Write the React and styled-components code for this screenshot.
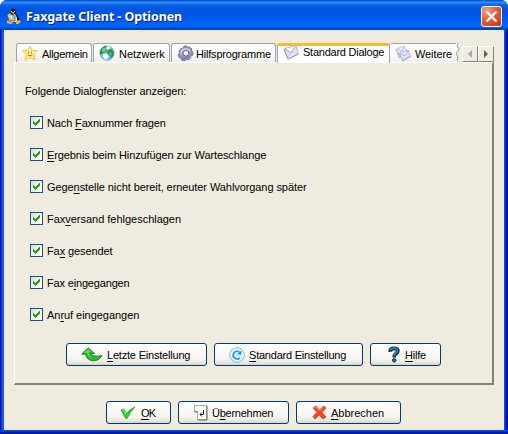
import React from "react";
import styled, { createGlobalStyle, css } from "styled-components";

const Global = createGlobalStyle`
  * { box-sizing: border-box; }
  body { margin: 0; background: #fff; overflow: hidden; font: 11px/14px "Liberation Sans", Arial, sans-serif; color: #000; }
  svg { display: block; flex: none; }
`;

const Window = styled.div`
  width: 508px;
  height: 434px;
  border-radius: 7px 7px 0 0;
  overflow: hidden;
  display: flex;
  flex-direction: column;
  background:
    linear-gradient(180deg, #0850e0 0, #0040d8 1px, #0030c0 2px, #0010a0 3px, #00138c 4px) 0 100% / 100% 4px no-repeat,
    linear-gradient(90deg, #0010b0 0, #0010b0 1px, #0831d9 1px, #0831d9 2px, #166aee 2px, #0855dd 4px, #0855dd 504px, #0050ee 504px, #0050ee 505px, #0033cc 505px, #0033cc 506px, #00138c 506px);
`;

const TitleBar = styled.header`
  height: 30px;
  flex: none;
  display: flex;
  align-items: center;
  padding: 2px 6px 0 6px;
  background: linear-gradient(180deg, #0050c8 0, #0058d8 1px, #3d95ff 2px, #2483f8 3px, #0a63e6 5px, #0056e0 8px, #0054e3 14px, #005cf4 20px, #0066ff 25px, #0064fa 27px, #0050d4 28px, #003dac 30px);
`;

const Title = styled.h1`
  margin: 2px auto 0 4px;
  font: bold 12.5px/18px "Noto Sans", sans-serif;
  letter-spacing: ${(p) => p.$track}px;
  white-space: nowrap;
  color: #fff;
  text-shadow: 1px 1px 0 #0a1883;
`;

const CloseButton = styled.button`
  width: 21px;
  height: 21px;
  margin-top: 1px;
  padding: 0;
  border: 1px solid #fff;
  border-radius: 3px;
  background: radial-gradient(circle at 25% 20%, #f0a088 0, #e4603c 45%, #d8401c 80%, #b93010 100%);
  display: flex;
  align-items: center;
  justify-content: center;
`;

const Client = styled.main`
  width: 500px;
  height: 400px;
  margin-left: 4px;
  background: #efebde;
  padding: 13px 10px 0;
`;

const TabStrip = styled.nav`
  height: 19px;
  display: flex;
  padding-left: 2px;
`;

const Tab = styled.div`
  width: ${(p) => p.$width}px;
  height: 19px;
  flex: none;
  display: flex;
  align-items: flex-start;
  gap: ${(p) => p.$gap}px;
  padding: 1px 0 0 5px;
  margin-right: ${(p) => (p.$active || p.$cut ? 0 : 1)}px;
  border: 1px solid #91a7b4;
  border-bottom: 0;
  ${(p) => p.$cut && css`border-right: 0; border-left: 0;`}
  border-radius: 3px ${(p) => (p.$cut ? 0 : 3)}px 0 0;
  background: linear-gradient(180deg, #fff, #fbfaf7 55%, #efede6);
  overflow: hidden;
  ${(p) => p.$active && css`
    height: 20px;
    border-top: 3px solid #fdb92d;
    background: #fff;
    padding-top: 0;
    & > svg { margin-top: -2px; }
    & > span { margin-top: -1px; }
  `}
`;

const Label = styled.span`
  letter-spacing: ${(p) => p.$track || 0}px;
  white-space: nowrap;
  padding-top: ${(p) => p.$drop || 0}px;
`;

const Key = styled.span`
  text-decoration: underline;
  text-decoration-thickness: 1px;
  text-underline-offset: 2px;
  text-decoration-skip-ink: none;
`;

const Scroller = styled.div`
  margin: 3px 0 0 2px;
  display: flex;
`;

const ScrollButton = styled.button`
  width: 16px;
  height: 16px;
  padding: 0;
  border: 1px solid;
  border-color: #fff #858278 #858278 #fff;
  background: #efebde;
  display: flex;
  align-items: center;
  justify-content: center;
`;

const Panel = styled.section`
  height: 323px;
  border: solid;
  border-width: 1px 2px 2px 1px;
  border-color: #fff #858278 #858278 #fff;
  padding: 21px 0 0 10px;
`;

const Row = styled.label`
  display: flex;
  align-items: flex-start;
  gap: 4px;
  height: 32px;
  padding-left: 5px;
`;

const Options = styled.div`
  padding-top: 18px;
`;

const Box = styled.span`
  width: 13px;
  height: 13px;
  flex: none;
  border: 1px solid #1c5180;
  background: linear-gradient(135deg, #dcdcd7, #fff 75%);
`;

const PanelActions = styled.div`
  display: flex;
  gap: 7px;
  padding: 3px 0 0 41px;
`;

const DialogActions = styled.footer`
  display: flex;
  gap: 7px;
  padding: 16px 0 0 92px;
`;

const Button = styled.button`
  width: ${(p) => p.$width}px;
  height: 23px;
  flex: none;
  display: flex;
  align-items: center;
  gap: ${(p) => p.$gap}px;
  padding: 0 0 0 ${(p) => p.$inset}px;
  border: 1px solid #003c74;
  border-radius: 3px;
  background: linear-gradient(180deg, #fff, #f6f4ef 70%, #ebe8e0 88%, #d8d1c7);
  font: inherit;
  color: #000;
`;

const Penguin = () => (
  <svg width="16" height="17" viewBox="0 0 16 17">
    <path d="M5 2Q7-1 9 2L10 6L13 10V14H3V8L5 6Z" fill="#080c12" />
    <path d="M6 7L9 6L11 10V14H5Z" fill="#eee" />
    <path d="M5 3h1v1h-1zM8 3h1v1h-1z" fill="#fff" />
    <path d="M5 4h4l-2 2z" fill="#eea900" />
    <path d="M1 13L3 11L7 15L5 16L1 15ZM10 13L13 12L15 14L12 16H10Z" fill="#f1b921" />
    <path d="M1 7L3 5L9 8L9 13L3 13Z" fill="#b9bdb7" stroke="#434a4d" strokeWidth=".7" />
    <path d="M3 8l3 1M5 8l1 3" stroke="#fff" />
  </svg>
);

const Star = () => (
  <svg width="16" height="16" viewBox="0 0 16 16">
    <path d="M8 1L10 5.2L15.3 5.7L12 9.3L13.2 15L8 12.8L2.8 15L4 9.5L.6 5.8L5.7 5.2Z" fill="#ffe86f" stroke="#e9c55c" strokeWidth=".9" strokeLinejoin="round" />
    <path d="M7.5 3L9 6L13 6.6L10 9L8 10L4 7L7 6Z" fill="#fff4a9" />
    <path d="M6.5 6.5v2M9.5 6.5v2M5.8 10q2.2 1.6 4.4 0" fill="none" stroke="#8d7430" strokeWidth=".9" />
  </svg>
);

const Globe = () => (
  <svg width="16" height="16" viewBox="0 0 16 16">
    <circle cx="8" cy="8" r="7.2" fill="#6db4dc" stroke="#5c9bc0" strokeWidth=".6" />
    <path d="M1 6Q3 1 8 1L9 3L7 4L8 6L5 7L3 9L1 9ZM9 5L12 4L14.8 7Q15 11 12.5 13L10.5 10L8 8Z" fill="#229744" />
    <path d="M3 4Q5 2 8 3L6 6L3 7Z" fill="#79cd78" />
    <path d="M7 2L10 1L12 3L8 5ZM4 9L8 8.5L10 12L7 15L3 12Z" fill="#e4f6fc" />
    <path d="M11 7l2 1-1 3-2-3z" fill="#65bd68" />
  </svg>
);

const Gear = () => (
  <svg width="17" height="17" viewBox="0 0 17 17">
    <path d="M7 1h3l.7 2 2-1L15 4l-1 2 2 1v3l-2 .5-.4 2-2.1 2.5-2-1-2 2-3-1-.2-2L2 12.5 1 10l1.5-2L2 6l2-2.5 2 .3z" fill="#9294c2" stroke="#66689b" strokeWidth=".8" />
    <path d="M4 9q0-5 5-5 3 0 4 2" fill="none" stroke="#d6d7ee" strokeWidth="1.5" />
    <circle cx="9" cy="8.2" r="2.8" fill="#fafaff" stroke="#6b6da3" />
    <path d="M5 13q4 2 7-2" fill="none" stroke="#6c6da0" strokeWidth="1.2" />
  </svg>
);

const Envelope = () => (
  <svg width="17" height="16" viewBox="0 0 17 16">
    <path d="M1 5L12.7 1L15.5 10L5 15Z" fill="#e3e4f5" stroke="#b3b4d6" />
    <path d="M1 5L5 15L15.5 10" fill="none" stroke="#9a9cc4" />
    <path d="M2 5.5L8.5 8.8L12.5 1.5" fill="none" stroke="#9092bd" strokeWidth=".8" />
    <path d="M5 14L7 8.5M15 10L9.7 8" fill="none" stroke="#c6c7e2" strokeWidth=".7" />
    <path d="M3 5L11.5 2.3L8.2 7.4Z" fill="#fff" />
  </svg>
);

const Stack = () => (
  <svg width="17" height="17" viewBox="0 0 17 17">
    <path d="M1 4L9 1L12 6L4 10Z" fill="#eceefa" stroke="#c3c5e2" />
    <path d="M1 4L4 13L6 12L4 9Z" fill="#bfc1e0" stroke="#b3b5d8" strokeWidth=".7" />
    <path d="M4.5 8L13 5L15.5 11.5L7.5 16Z" fill="#e3e5f6" stroke="#b3b5d8" />
    <path d="M5 8.5L10 11L13 5.5M3 4.5L7 6L9 2" fill="none" stroke="#a4a7ce" strokeWidth=".8" />
    <path d="M7.5 15.5L15.5 11.5" stroke="#999cc8" />
  </svg>
);

const Undo = () => (
  <svg width="22" height="15" viewBox="0 0 22 15">
    <path d="M7 .7L13.4 6.5H9.8Q11.5 10.5 21 8.5Q18 14 12 13.8Q6 13.4 4.5 7.2H.8Z" fill="#27b92c" stroke="#087316" strokeWidth=".8" strokeLinejoin="round" />
    <path d="M7 2L10 5H7.5Q8 9 12 11Q7 11 6 6H3Z" fill="#5fdc50" />
  </svg>
);

const Reload = () => (
  <svg width="16" height="16" viewBox="0 0 16 16">
    <circle cx="8" cy="8" r="7.3" fill="#d9f1ff" stroke="#75baf0" />
    <circle cx="8" cy="8" r="6" fill="none" stroke="#f7fdff" />
    <path d="M10.8 10.8A3.8 3.8 0 1 1 10.3 5" fill="none" stroke="#2a9cec" strokeWidth="1.8" />
    <path d="M12.3 3.5V7.6H8.2Z" fill="#168ce3" />
  </svg>
);

const Question = () => (
  <svg width="13" height="17" viewBox="0 0 13 17">
    <path d="M3 5Q3 3 6 3Q9 3 8 6L5.5 9V11.5" transform="translate(1 .6)" fill="none" stroke="#a7a49c" strokeWidth="3.5" />
    <path d="M2.2 5.8Q1.8 2.2 6 2.2Q10.8 2.3 9.7 5.7Q9.4 7 7.5 8Q6.2 9 6.2 11.3" fill="none" stroke="#08253d" strokeWidth="3.6" />
    <path d="M2.3 4.8Q2.5 2.2 6 2.2Q10.2 2.3 9.5 5.3Q9.2 6.5 7.4 7.6Q6.2 8.8 6.2 10.5" fill="none" stroke="#2b84bd" strokeWidth="1.8" />
    <circle cx="6.2" cy="14.3" r="1.7" fill="#2779b0" stroke="#08253d" />
  </svg>
);

const Tick = () => (
  <svg width="16" height="14" viewBox="0 0 16 14">
    <path d="M1 4L4 3L6.5 7.5Q10 3 15 1Q10 6 7 12.5H5.7Z" fill="#32ce32" stroke="#119c28" strokeWidth=".7" />
    <path d="M2 4.2L4 4L6 8.5" fill="none" stroke="#85ea77" />
  </svg>
);

const Enter = () => (
  <svg width="14" height="16" viewBox="0 0 14 16">
    <path d="M.5 .5H12.5V14.5H3.5V6.5H.5Z" fill="#fff" stroke="#aaa9a5" />
    <path d="M13 1V15H4M1 6V7H4" fill="none" stroke="#6b6b69" />
    <path d="M9.5 5V9.5H6M7.8 7.5L6 9.5L7.8 11.5" fill="none" stroke="#222" />
  </svg>
);

const Cross = () => (
  <svg width="15" height="15" viewBox="0 0 15 15">
    <path d="M1 3L4 1L7.5 5L11.5 1L14 3L10 7.3L14 12L11 14L7.2 10L3 14L1 11.5L5 7.3Z" fill="#ee4828" stroke="#d8311d" strokeWidth=".8" />
    <path d="M2 3L4 2L7.5 6L11.5 2" fill="none" stroke="#ff9a70" />
  </svg>
);

const CheckMark = () => (
  <svg width="11" height="11" viewBox="0 0 11 11" shapeRendering="crispEdges">
    <path d="M2 4H3V5H4V6H5V5H6V4H7V3H8V2H9V5H8V6H7V7H6V8H5V9H4V8H3V7H2Z" fill="#21a121" />
  </svg>
);

const tabs = [
  { width: 76, Icon: Star, text: "Allgemein", drop: 2, gap: 4, track: -0.3 },
  { width: 77, Icon: Globe, text: "Netzwerk", drop: 2, gap: 4, track: 0 },
  { width: 105, Icon: Gear, text: "Hilfsprogramme", drop: 2, gap: 2, track: -0.2 },
  { width: 113, Icon: Envelope, text: "Standard Dialoge", drop: 0, gap: 3, active: true, track: -0.24 },
  { width: 66, Icon: Stack, text: "Weitere", drop: 2, gap: 3, cut: true, track: -0.1 },
];

const options = [
  ["Nach ", "F", "axnummer fragen", -0.14],
  ["", "E", "rgebnis beim Hinzufügen zur Warteschlange", -0.1],
  ["Gege", "n", "stelle nicht bereit, erneuter Wahlvorgang später", -0.08],
  ["Fax", "v", "ersand fehlgeschlagen", -0.02],
  ["Fa", "x", " gesendet", -0.1],
  ["Fax e", "i", "ngegangen", -0.17],
  ["An", "r", "uf eingegangen", -0.04],
];

const Caption = ({ parts: [before, key, after, track], drop }) => (
  <Label $track={track} $drop={drop}>{before}<Key>{key}</Key>{after}</Label>
);

const Action = ({ width, inset, gap, Icon, parts }) => (
  <Button $width={width} $inset={inset} $gap={gap}>
    <Icon />
    <Caption parts={parts} drop={0} />
  </Button>
);

export default function App() {
  return (
    <>
      <Global />
      <Window>
        <TitleBar>
          <Penguin />
          <Title $track={-0.1}>Faxgate Client - Optionen</Title>
          <CloseButton aria-label="Schließen">
            <svg width="13" height="13" viewBox="0 0 13 13"><path d="M1.5 1.5L11.5 11.5M11.5 1.5L1.5 11.5" stroke="#fff" strokeWidth="2.2" /></svg>
          </CloseButton>
        </TitleBar>
        <Client>
          <TabStrip>
            {tabs.map(({ width, Icon, text, drop, gap, active, cut, track }) => (
              <Tab key={text} $width={width} $active={active} $cut={cut} $gap={gap}>
                <Icon />
                <Label $drop={drop} $track={track}>{text}</Label>
              </Tab>
            ))}
            <svg width="4" height="19" viewBox="0 0 4 19">
              <path d="M0 0H2L1 3L3 6L1 9L0 11L2 14L1 17L2 19H0Z" fill="#fff" />
              <path d="M2 0L1 3L3 6L1 9L0 11L2 14L1 17L2 19" fill="none" stroke="#9e9b91" />
            </svg>
            <Scroller>
              <ScrollButton aria-label="Zurück"><svg width="4" height="8" viewBox="0 0 4 8"><path d="M4 0V8L0 4Z" fill="#aca899" /></svg></ScrollButton>
              <ScrollButton aria-label="Weiter"><svg width="4" height="8" viewBox="0 0 4 8"><path d="M0 0V8L4 4Z" fill="#626054" /></svg></ScrollButton>
            </Scroller>
          </TabStrip>
          <Panel>
            <Label $track={-0.1}>Folgende Dialogfenster anzeigen:</Label>
            <Options>
              {options.map((parts) => (
                <Row key={parts.join("")}>
                  <Box><CheckMark /></Box>
                  <Caption parts={parts} />
                </Row>
              ))}
            </Options>
            <PanelActions>
              <Action width={141} inset={14} gap={4} Icon={Undo} parts={["", "L", "etzte Einstellung", -0.2]} />
              <Action width={149} inset={14} gap={4} Icon={Reload} parts={["", "S", "tandard Einstellung", -0.22]} />
              <Action width={71} inset={17} gap={4} Icon={Question} parts={["", "H", "ilfe", -0.2]} />
            </PanelActions>
          </Panel>
          <DialogActions>
            <Action width={65} inset={13} gap={5} Icon={Tick} parts={["", "O", "K", -0.8]} />
            <Action width={111} inset={15} gap={4} Icon={Enter} parts={["Ü", "b", "ernehmen", -0.25]} />
            <Action width={105} inset={15} gap={4} Icon={Cross} parts={["", "A", "bbrechen", 0]} />
          </DialogActions>
        </Client>
      </Window>
    </>
  );
}
